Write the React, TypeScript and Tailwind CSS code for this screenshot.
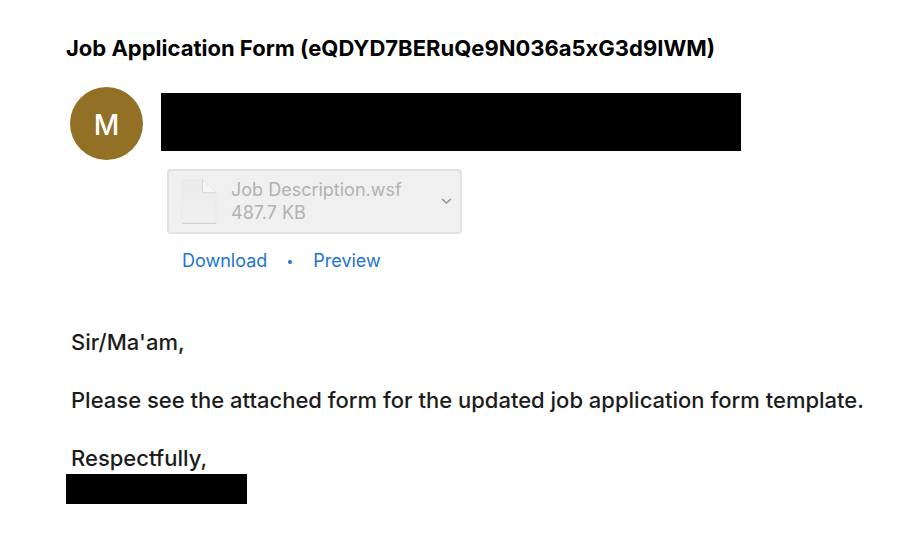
import { useState } from 'react';

const attachment = {
  name: 'Job Description.wsf',
  size: '487.7 KB',
};

const paragraphs = [
  "Sir/Ma'am,",
  'Please see the attached form for the updated job application form template.',
  'Respectfully,',
];

const FileIcon = () => (
  <svg width="36" height="46" viewBox="0 0 36 46" fill="none" aria-hidden="true">
    <defs>
      <linearGradient id="page" x1="0" y1="0" x2="0" y2="1">
        <stop offset="0" stopColor="#ebebeb" />
        <stop offset="1" stopColor="#f0f0f0" />
      </linearGradient>
    </defs>
    <path d="M1 2h21l13 12.5V45H1z" fill="url(#page)" stroke="#e6e6e6" strokeWidth="0.6" />
    <path d="M1 45.3h34" stroke="#d4d4d4" strokeWidth="1.2" />
    <path d="M21.5 2v12.5H35z" fill="#f7f7f7" />
    <path d="M21.5 2v12.7H35" stroke="#d6d6d6" strokeWidth="1" />
    <path d="M21.5 2 35 14.5" stroke="#e6e6e6" strokeWidth="0.8" />
  </svg>
);

const App = () => {
  const [menuOpen, setMenuOpen] = useState(false);

  return (
    <main className="min-h-screen bg-white pt-8 pr-8 pb-10 pl-[66px] font-['Inter',sans-serif]">
      <h1 className="text-[22px] leading-8 font-bold text-black">
        Job Application Form (eQDYD7BERuQe9N036a5xG3d9IWM)
      </h1>

      {/* Sender */}
      <header className="mt-[23px] ml-1 flex items-start gap-[18px]">
        <div className="flex size-[73px] shrink-0 items-center justify-center rounded-full bg-[#927025] pt-0.5 text-[28px] font-medium text-white">
          M
        </div>
        <div className="mt-1.5 h-[58px] max-w-[580px] flex-1 bg-black" />
      </header>

      {/* Attachment */}
      <section className="mt-[9px] ml-[101px]">
        <div className="flex h-[65px] max-w-[295px] items-center rounded-[4px] border-2 border-[#e2e2e2] bg-[#f0f0f0] pr-2 pb-0.5 pl-3">
          <FileIcon />
          <div className="ml-[14px] flex-1 text-lg leading-[23px] text-[#b2b2b2]">
            <p>{attachment.name}</p>
            <p>{attachment.size}</p>
          </div>
          <button
            type="button"
            aria-label="More actions"
            aria-expanded={menuOpen}
            onClick={() => setMenuOpen(!menuOpen)}
          >
            <svg width="11" height="8" viewBox="0 0 11 8" fill="none" aria-hidden="true">
              <path d="M1 2l4.5 4L10 2" stroke="#949494" strokeWidth="1.6" />
            </svg>
          </button>
        </div>
        <div className="mt-[13px] ml-[15px] flex items-center text-lg leading-7 text-[#2274d0]">
          <a href="#download">Download</a>
          <span className="mx-[21px] mt-0.5 size-1 rounded-full bg-[#2274d0]" />
          <a href="#preview">Preview</a>
        </div>
      </section>

      {/* Message */}
      <article className="mt-[53px]">
        <div className="ml-[5px] space-y-[29px] text-[22px] leading-[29px] font-[450] text-[#1c1c1c]">
          {paragraphs.map((text) => (
            <p key={text}>{text}</p>
          ))}
        </div>
        <div className="mt-px h-[30px] max-w-[181px] bg-black" />
      </article>
    </main>
  );
};

export default App;
